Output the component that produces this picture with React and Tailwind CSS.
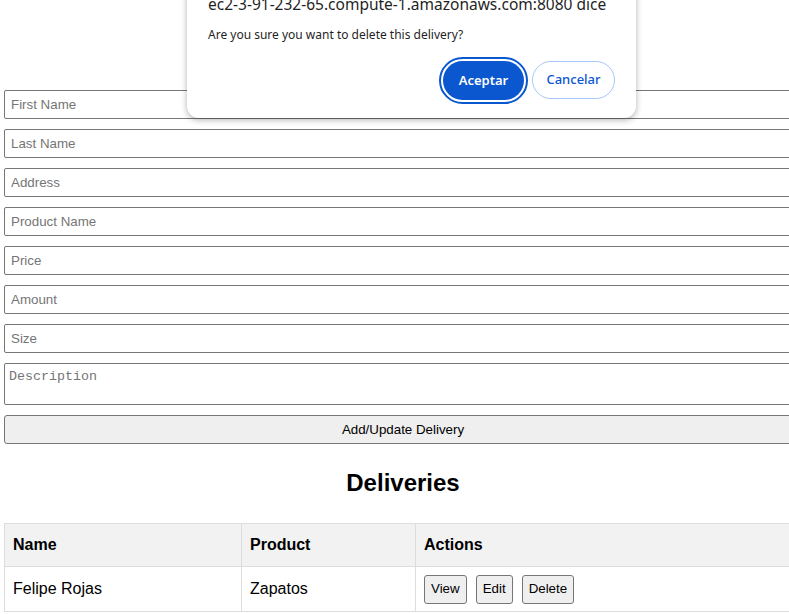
import React from "react";

const fields = ["First Name", "Last Name", "Address", "Product Name", "Price", "Amount", "Size"];

function Btn({ children }) {
  return (
    <button className="h-[29px] px-[6px] bg-[#efefef] border border-[#767676] rounded-[3px] text-[13.33px] text-black leading-none">
      {children}
    </button>
  );
}

export default function App() {
  return (
    <div className="relative w-[789px] h-[614px] overflow-hidden bg-white" style={{ fontFamily: '"Liberation Sans", Arial, sans-serif' }}>
      <div className="ml-1 w-[798px] pt-[90px]">
        <div className="flex flex-col gap-[10px]">
          {fields.map((f) => (
            <input
              key={f}
              placeholder={f}
              className="h-[29px] w-full border border-[#767676] rounded-[2px] px-[6px] text-[13.33px] text-black placeholder:text-[#757575] outline-none"
            />
          ))}
          <textarea
            placeholder="Description"
            className="h-[42px] w-full border border-[#767676] rounded-[2px] px-[4px] py-[5px] text-[13.33px] text-black placeholder:text-[#757575] resize-none outline-none leading-[15px]"
            style={{ fontFamily: '"Liberation Mono", "DejaVu Sans Mono", monospace' }}
          />
          <button className="h-[29px] w-full bg-[#efefef] border border-[#767676] rounded-[3px] text-[13.33px] text-black">
            Add/Update Delivery
          </button>
        </div>
        <h2 className="mt-[25px] h-[28px] leading-[28px] text-center text-[24px] font-bold text-black">Deliveries</h2>
        <table className="mt-[26px] w-full border-collapse text-[16px] text-black">
          <thead>
            <tr className="bg-[#f2f2f2]">
              <th className="w-[237px] h-[43px] border border-[#dddddd] px-2 text-left font-bold">Name</th>
              <th className="w-[174px] h-[43px] border border-[#dddddd] px-2 text-left font-bold">Product</th>
              <th className="h-[43px] border border-[#dddddd] px-2 text-left font-bold">Actions</th>
            </tr>
          </thead>
          <tbody>
            <tr>
              <td className="h-[45px] border border-[#dddddd] px-2">Felipe Rojas</td>
              <td className="h-[45px] border border-[#dddddd] px-2">Zapatos</td>
              <td className="h-[45px] border border-[#dddddd] px-2">
                <div className="flex gap-[9px]">
                  <Btn>View</Btn>
                  <Btn>Edit</Btn>
                  <Btn>Delete</Btn>
                </div>
              </td>
            </tr>
          </tbody>
        </table>
      </div>

      <div
        className="absolute left-[187px] top-[-20px] w-[449px] h-[138px] bg-white rounded-[12px] shadow-[0_2px_6px_rgba(0,0,0,0.3)] pl-[21px] pr-[20px] pt-[13px]"
        style={{ fontFamily: '"Noto Sans", "Open Sans", sans-serif' }}
      >
        <div className="text-[15.5px] leading-[22px] text-[#1f1f1f] whitespace-nowrap">ec2-3-91-232-65.compute-1.amazonaws.com:8080 dice</div>
        <div className="mt-[12px] text-[12px] leading-[16px] text-[#1f1f1f]">Are you sure you want to delete this delivery?</div>
        <div className="mt-[18px] flex justify-end gap-[8px] pr-[1px]">
          <button className="h-[39px] w-[81px] rounded-full bg-[#0b57d0] text-white text-[13px] font-semibold outline-2 outline-offset-2 outline-[#0b57d0] outline">
            Aceptar
          </button>
          <button className="h-[38px] w-[83px] rounded-full bg-white border border-[#a8c7fa] text-[#0b57d0] text-[13px] font-medium">
            Cancelar
          </button>
        </div>
      </div>
    </div>
  );
}
